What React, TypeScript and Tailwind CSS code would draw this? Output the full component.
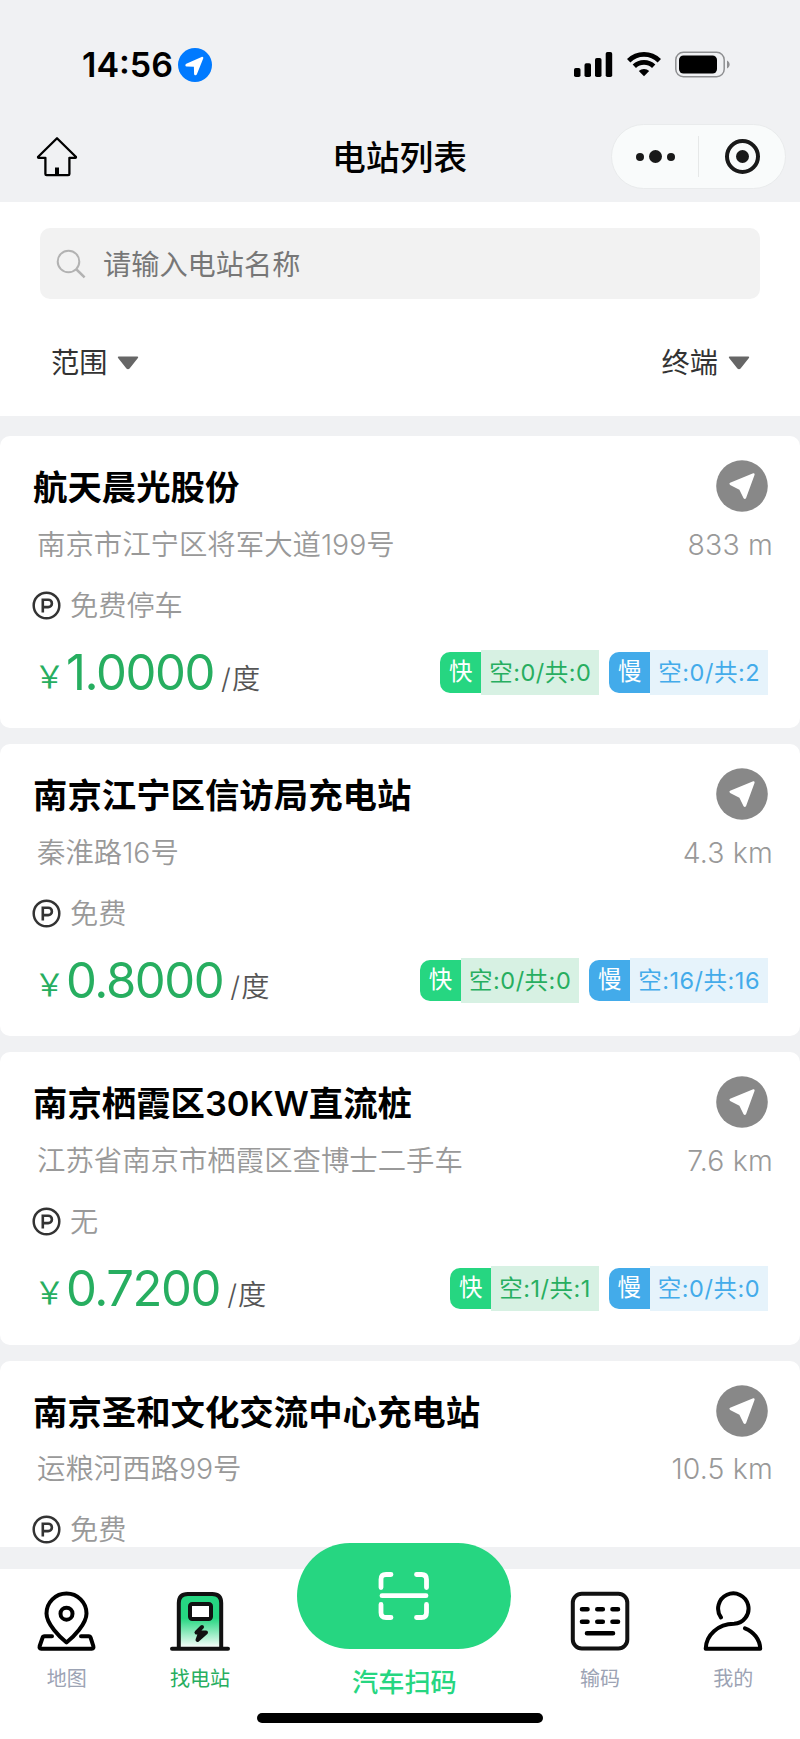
import type { ReactNode } from "react";

type Station = {
  name: string;
  address: string;
  distance: string;
  parking: string;
  price: string;
  fast: string;
  slow: string;
};

const stations: Station[] = [
  { name: "航天晨光股份", address: "南京市江宁区将军大道199号", distance: "833 m", parking: "免费停车", price: "1.0000", fast: "空:0/共:0", slow: "空:0/共:2" },
  { name: "南京江宁区信访局充电站", address: "秦淮路16号", distance: "4.3 km", parking: "免费", price: "0.8000", fast: "空:0/共:0", slow: "空:16/共:16" },
  { name: "南京栖霞区30KW直流桩", address: "江苏省南京市栖霞区查博士二手车", distance: "7.6 km", parking: "无", price: "0.7200", fast: "空:1/共:1", slow: "空:0/共:0" },
  { name: "南京圣和文化交流中心充电站", address: "运粮河西路99号", distance: "10.5 km", parking: "免费", price: "", fast: "", slow: "" },
];

function StatusBar() {
  return (
    <div className="flex h-[124px] items-start justify-between pl-[82px] pr-[70px] pt-12">
      <div className="flex h-[34px] items-center">
        <span className="w-[96px] text-[34px] font-semibold leading-[34px]">14:56</span>
        <svg width="34" height="34" viewBox="0 0 34 34">
          <circle cx="17" cy="17" r="17" fill="#007aff" />
          <path d="M23.600 8.900c1.200-.5 2.100.5 1.600 1.700l-6.300 15.600c-.6 1.400-2.700 1.200-2.800-.3l-.2-7.200-7.300-.2c-1.500-.1-1.700-2.200-.3-2.800z" fill="#fff" />
        </svg>
      </div>
      <div className="mt-[3px] flex items-start">
        <svg width="40" height="27" viewBox="0 0 40 27">
          <rect x="1" y="17" width="6.500" height="9" rx="1.800" />
          <rect x="11.500" y="12.300" width="6.500" height="13.700" rx="1.800" />
          <rect x="22" y="7" width="6.500" height="19" rx="1.800" />
          <rect x="32.700" y="1" width="6.500" height="25" rx="1.800" />
        </svg>
        <svg className="ml-[14px]" width="34" height="26" viewBox="0 0 34 26" fill="none" stroke="#000" strokeWidth="4.800">
          <path d="M1.700 9.700a21.800 21.800 0 0 1 30.600 0" />
          <path d="M7.300 15.300a14 14 0 0 1 19.400 0" />
          <path d="M17 25.200l-5.200-5.200a7.500 7.500 0 0 1 10.400 0z" fill="#000" stroke="none" />
        </svg>
        <svg className="ml-[14px]" width="55" height="27" viewBox="0 0 55 27">
          <rect x=".8" y="1.200" width="48.400" height="24.600" rx="7.600" fill="none" stroke="#8e8f91" strokeWidth="1.500" />
          <rect x="4" y="4.500" width="38" height="18" rx="4.500" />
          <path d="M52 9.500c3.500 1.500 3.500 6.500 0 8z" fill="#8e8f91" />
        </svg>
      </div>
    </div>
  );
}

function NavBar() {
  return (
    <div className="grid h-[78px] grid-cols-[1fr_auto_1fr] items-start">
      <svg className="ml-[36px] mt-3" width="42" height="42" viewBox="0 0 42 42" fill="none" stroke="#000" strokeWidth="2.300" strokeLinejoin="round">
        <path d="M21 2.200L2.200 20.700q-.6 1 .6 1.100h6.600V38q0 1.200 1.200 1.200h21.600q1.200 0 1.200-1.200V21.800h5.800q1.200-.1.600-1.100z" />
        <path d="M19 31.500h4V39h-4z" fill="#000" stroke="none" />
      </svg>
      <h1 className="-ml-px text-[33.800px] font-medium leading-[68px]">电站列表</h1>
      <div className="mr-[14px] flex h-[65px] w-[175px] items-center justify-self-end rounded-full border border-[#e9ebec] bg-[#f9fbfb]">
        <div className="flex flex-1 items-center justify-center gap-[5px]">
          <i className="size-[8px] rounded-full bg-[#191919]" />
          <i className="size-[13px] rounded-full bg-[#191919]" />
          <i className="size-[8px] rounded-full bg-[#191919]" />
        </div>
        <div className="h-[41px] w-px bg-[#e6e8e8]" />
        <div className="flex flex-1 justify-center">
          <div className="flex size-[35px] items-center justify-center rounded-full border-[4px] border-[#191919]">
            <i className="size-[13px] rounded-full bg-[#191919]" />
          </div>
        </div>
      </div>
    </div>
  );
}

function Filter({ label }: { label: string }) {
  return (
    <div className="flex items-center gap-[10px] text-[28.200px] leading-[40px] text-[#333]">
      {label}
      <svg width="22" height="14" viewBox="0 0 22 14" fill="#666">
        <path d="M1.600 .5h18.800q1.500.3.500 1.600l-8.300 10.300q-1.600 1.500-3.200 0L1.100 2.100q-1-1.300.5-1.600z" />
      </svg>
    </div>
  );
}

function SearchPanel() {
  return (
    <div className="h-[214px] shrink-0 bg-white px-10 pt-[26px]">
      <div className="flex h-[71px] items-center rounded-[10px] bg-[#f2f2f2] pl-4">
        <svg width="30" height="30" viewBox="0 0 30 30" fill="none" stroke="#b2b2b2" strokeWidth="2">
          <circle cx="12.500" cy="12.500" r="10.800" />
          <path d="M20 20l8.600 8.300" strokeWidth="2.500" />
        </svg>
        <span className="ml-[17px] mt-[3px] text-[28.200px] text-[#777]">请输入电站名称</span>
      </div>
      <div className="mt-11 flex justify-between pl-[11px] pr-[10px]">
        <Filter label="范围" />
        <Filter label="终端" />
      </div>
    </div>
  );
}

function FastBadge({ text }: { text: string }) {
  return (
    <div className="flex items-center">
      <span className="h-[41px] w-[41px] rounded-l-[10px] bg-[#26d681] text-center text-[23.500px] leading-[40px] text-white">快</span>
      <span className="h-[45px] bg-[#d7f1e3] px-2 text-[23.500px] leading-[45px] tracking-[0.5px] text-[#27ae60]">{text}</span>
    </div>
  );
}

function SlowBadge({ text }: { text: string }) {
  return (
    <div className="flex items-center">
      <span className="h-[41px] w-[41px] rounded-l-[10px] bg-[#43abea] text-center text-[23.500px] leading-[40px] text-white">慢</span>
      <span className="h-[45px] bg-[#e6f3fb] px-2 text-[23.500px] leading-[45px] tracking-[0.5px] text-[#43abea]">{text}</span>
    </div>
  );
}

function StationCard({ s }: { s: Station }) {
  return (
    <div className="h-[292.200px] shrink-0 rounded-[10px] bg-white">
      <div className="flex h-[84px] items-start justify-between pl-[33px] pr-8 pt-6">
        <h2 className="text-[34.400px] font-semibold leading-[55px] text-black">{s.name}</h2>
        <svg width="52" height="52" viewBox="0 0 52 52">
          <circle cx="26" cy="26" r="25.800" fill="#888" />
          <path d="M37.200 13.200q1.800-.4 1.400 1.500l-8.600 23.600q-1.200 1.600-2.400 0l-4.200-8.600-9.300-4.700q-1.600-1.200 0-2.300z" fill="#fff" />
        </svg>
      </div>
      <div className="flex h-[50px] items-center justify-between pl-[37px] pr-[27px] text-[28.400px] font-[350] text-[#999]">
        <span>{s.address}</span>
        <span className="tracking-[0.2px]">{s.distance}</span>
      </div>
      <div className="mt-2 flex h-[54px] items-center pl-8">
        <svg width="29" height="29" viewBox="0 0 29 29" fill="none" stroke="#333">
          <circle cx="14.500" cy="14.500" r="12.800" strokeWidth="2.500" />
          <path d="M10.800 21.500V8.700h5.400a3.700 3.700 0 0 1 0 7.400h-5.400" strokeWidth="2.600" />
        </svg>
        <span className="ml-[9px] mt-[2px] text-[28.200px] font-[350] text-[#999]">{s.parking}</span>
      </div>
      {s.price && (
        <div className="mt-[3px] flex items-center justify-between pl-[34px] pr-[32px]">
          <div className="mt-2 flex items-baseline leading-[60px] text-[#27ae60]">
            <span className="-translate-y-[2px] w-[32px] text-[31px] leading-none">￥</span>
            <span className="text-[49px] font-normal tracking-[-1.400px]">{s.price}</span>
            <span className="-translate-y-px ml-[7px] text-[28.200px] font-[350] tracking-[1px] text-[#555]">/度</span>
          </div>
          <div className="flex gap-[10px]">
            <FastBadge text={s.fast} />
            <SlowBadge text={s.slow} />
          </div>
        </div>
      )}
    </div>
  );
}

function MapIcon() {
  return (
    <svg width="59" height="60" viewBox="0 0 59 60" fill="none" stroke="#000" strokeWidth="4" strokeLinecap="round" strokeLinejoin="round">
      <path d="M29.500 51.500C23 46.500 9.500 33 9.500 22.500a20 20 0 0 1 40 0C49.500 33 36 46.500 29.500 51.500z" />
      <circle cx="29.500" cy="22.700" r="6" />
      <path d="M15 45.300H7.500q-1.500 0-2 1.500L2.700 55q-.7 2.700 1.500 2.700h50.600q2.200 0 1.500-2.700l-2.600-8.200q-.5-1.500-2-1.500H44" />
    </svg>
  );
}

function StationIcon() {
  return (
    <svg width="60" height="60" viewBox="0 0 60 60" stroke="#111" strokeWidth="4" strokeLinecap="round" strokeLinejoin="round">
      <defs>
        <linearGradient id="pump" x1="0" y1="0" x2="0" y2="1">
          <stop offset="45%" stopColor="#26d681" />
          <stop offset="100%" stopColor="#fff" />
        </linearGradient>
      </defs>
      <path d="M8.800 57V12q0-9 9-9h24.400q9 0 9 9v45" fill="url(#pump)" />
      <path d="M2 57.700h56" />
      <rect x="20" y="13" width="21" height="15" rx="2.200" fill="#fff" />
      <path d="M32 36l-5.500 5.500h9.500l-8.500 7.500 2-5.500" fill="none" />
    </svg>
  );
}

function ScanIcon() {
  return (
    <svg width="52" height="50" viewBox="0 0 52 50" fill="none" stroke="#fff" strokeWidth="4.800" strokeLinecap="round">
      <path d="M3 16.500V8.500q0-5 5-5h5" />
      <path d="M38.500 3.500h5q5 0 5 5v8" />
      <path d="M3 33.500v8q0 5 5 5h5" />
      <path d="M38.500 46.500h5q5 0 5-5v-8" />
      <path d="M4 24.700h44" />
    </svg>
  );
}

function KeypadIcon() {
  return (
    <svg width="60" height="60" viewBox="0 0 60 60" fill="none" stroke="#111" strokeWidth="4" strokeLinecap="round">
      <rect x="2.800" y="2.800" width="54.500" height="54.700" rx="9" />
      <path d="M12 18.300h5.500M27.300 18.300h5.500M42.500 18.300h5.500M12 30.700h5.500M27.300 30.700h5.500M42.500 30.700h5.500M17 42.300h26" stroke="#000" strokeWidth="4.600" />
    </svg>
  );
}

function UserIcon() {
  return (
    <svg width="60" height="60" viewBox="0 0 60 60" fill="none" stroke="#000" strokeWidth="4" strokeLinecap="round" strokeLinejoin="round">
      <path d="M18 26.500A15.200 15.200 0 1 1 31 32.800C15 33 3 44 2.700 57.700h54.500C57 48.500 50.500 40.500 42 37.300" />
    </svg>
  );
}

function Tab({ label, active, children }: { label: string; active?: boolean; children: ReactNode }) {
  return (
    <div className="flex w-[133.300px] flex-col items-center pt-[22px]">
      {children}
      <span className={active ? "mt-[13px] text-[20px] leading-[30px] text-[#27ae60]" : "mt-[13px] text-[20px] leading-[30px] text-[#9ca3b4]"}>{label}</span>
    </div>
  );
}

function TabBar() {
  return (
    <div className="h-[170px] shrink-0 bg-white">
      <div className="flex h-[144px]">
        <Tab label="地图"><MapIcon /></Tab>
        <Tab label="找电站" active><StationIcon /></Tab>
        <div className="z-10 -mt-[26.500px] flex w-[266.700px] flex-col items-center pl-[9px]">
          <div className="flex h-[106px] w-[214px] shrink-0 items-center justify-center rounded-full bg-[#26d681]">
            <ScanIcon />
          </div>
          <span className="mt-[14px] text-[26.200px] font-medium leading-[40px] text-[#26d681]">汽车扫码</span>
        </div>
        <Tab label="输码"><KeypadIcon /></Tab>
        <Tab label="我的"><UserIcon /></Tab>
      </div>
      <div className="mx-auto h-[10px] w-[286px] rounded-full bg-black" />
    </div>
  );
}

export default function App() {
  return (
    <div className="flex h-[1739px] w-[800px] flex-col overflow-hidden bg-[#f0f1f3] font-['Inter','Noto_Sans_CJK_SC',sans-serif] text-black">
      <StatusBar />
      <NavBar />
      <SearchPanel />
      <div className="mb-[22px] flex min-h-0 flex-1 flex-col gap-4 overflow-hidden pt-5">
        {stations.map((s) => (
          <StationCard key={s.name} s={s} />
        ))}
      </div>
      <TabBar />
    </div>
  );
}
